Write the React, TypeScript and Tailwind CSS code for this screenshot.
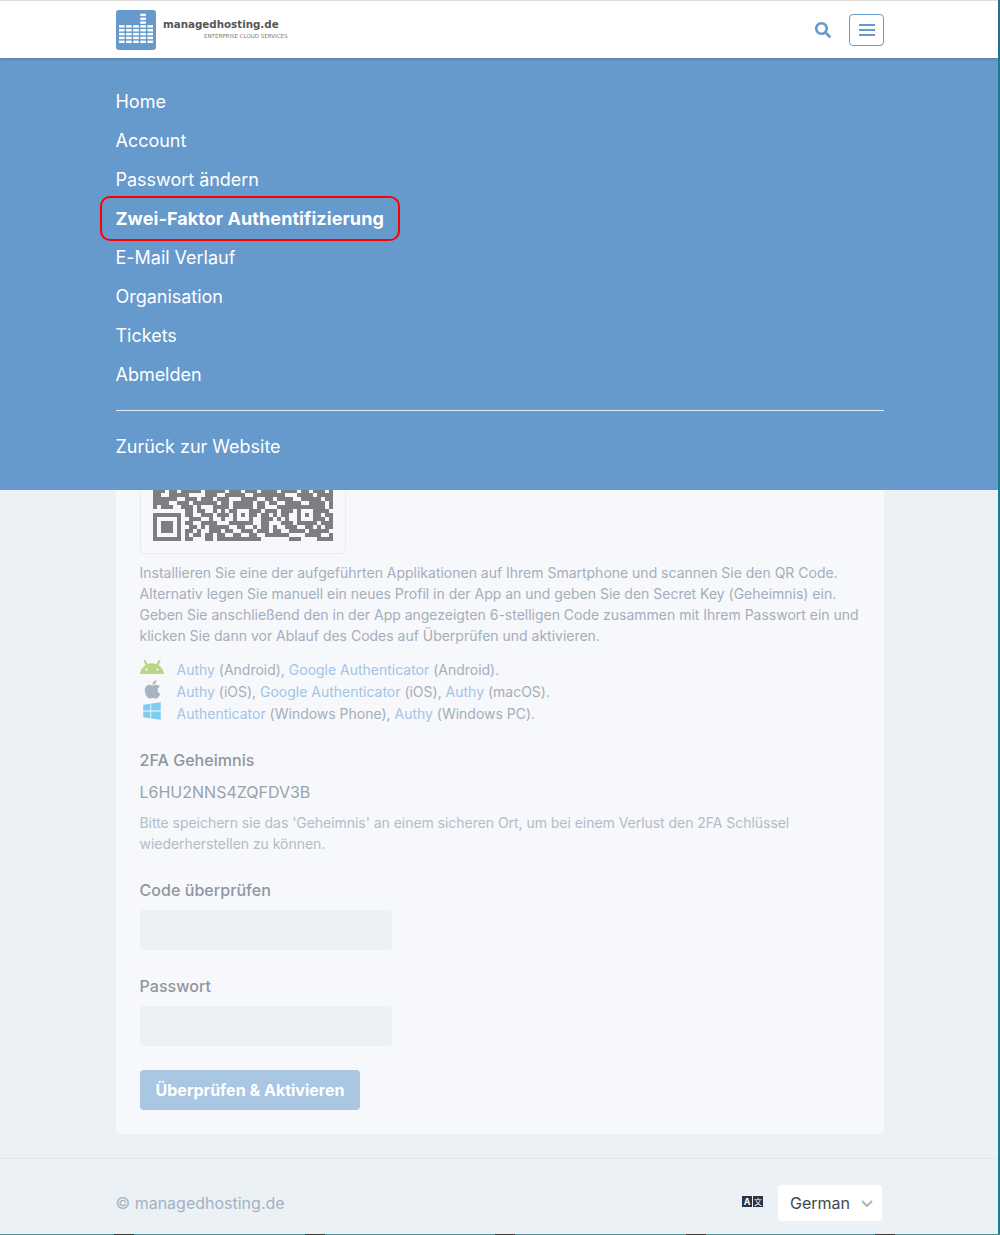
// App.tsx
import { FaApple, FaSearch, FaWindows } from "react-icons/fa";
import { SiAndroid } from "react-icons/si";

const menuItems = ["Home", "Account", "Passwort ändern", "Zwei-Faktor Authentifizierung", "E-Mail Verlauf", "Organisation", "Tickets", "Abmelden"];

// untere Zeilen des QR Codes, der Rest liegt hinter dem Menü
const qrRows = [
  "111011011111011111011101110111101111011011101",
  "110011111000011100111110011111111000111101111",
  "111111001110111011100011110011011110011111011",
  "111100111011111101101111101101100111100111101",
  "101110011101000111101111101100011111111111101",
  "000000001101100101011000111011101110100011110",
  "111111101100111011101010110110101100101011011",
  "100000100111001001001000100111010100100011101",
  "101110101100111100011111100110001110111110111",
  "101110100110101111100110010110100111001101011",
  "101110101101001110110011101110110011110111110",
  "100000101011011011001100110011111100001111001",
  "111111101100011011111111111000000011100001111",
];

const footerMarks = [114, 305, 495, 686, 875];

function Logo() {
  const cols = [0, 1, 2, 3, 4];
  const rows = [0, 1, 2, 3, 4];
  return (
    <svg width="40" height="40" viewBox="0 0 40 40">
      <rect width="40" height="40" rx="3" fill="#6699cc" />
      {cols.map((c) =>
        rows.map((r) => <rect key={`${c}-${r}`} x={3 + c * 7.1} y={15.2 + r * 3.85} width="5.6" height="2.4" fill="#fff" />)
      )}
      {[3.7, 7.6, 11.4].map((y) => (
        <rect key={y} x={24.3} y={y} width="5.6" height="2.4" fill="#fff" />
      ))}
    </svg>
  );
}

function QrCode() {
  return (
    <svg width="180" height="52" viewBox="0 0 180 52" className="block" shapeRendering="crispEdges">
      {qrRows.map((row, y) =>
        row.split("").map((cell, x) => (cell === "1" ? <rect key={`${x}-${y}`} x={x * 4} y={y * 4} width="4" height="4" fill="#7c7e82" /> : null))
      )}
    </svg>
  );
}

function LanguageIcon() {
  return (
    <svg width="21" height="11" viewBox="0 0 21 11">
      <rect width="10" height="11" fill="#2b3147" />
      <rect x="11" width="10" height="11" fill="#2b3147" />
      <text x="5" y="9" textAnchor="middle" fontSize="9" fontWeight="700" fill="#fff" fontFamily="Inter, sans-serif">A</text>
      <text x="16" y="9" textAnchor="middle" fontSize="8" fill="#fff" fontFamily="'Noto Sans CJK SC', sans-serif">文</text>
    </svg>
  );
}

export default function App() {
  return (
    <div className="relative w-[1000px] h-[1235px] overflow-hidden bg-[#1f7a94] [font-family:Inter,sans-serif]">
      <div className="relative w-[998px] h-[1234px] bg-[#ecf1f5]">
        {/* Kopfzeile */}
        <header className="relative z-20 h-[58px] bg-white border-t border-[#dcdcdc] shadow-[0_1px_3px_rgba(0,0,0,0.2)]">
          <div className="mx-[116px] w-[768px] h-full flex items-center justify-between">
            <div className="flex items-start">
              <Logo />
              <div className="ml-[7px] w-[124px] pt-[7px] [font-family:'DejaVu_Sans',sans-serif]">
                <div className="text-[10.3px] leading-[14px] font-bold text-[#555555] whitespace-nowrap">managedhosting.de</div>
                <div className="mt-[2px] ml-[41px] text-[5.5px] leading-[7px] text-[#777777] whitespace-nowrap">ENTERPRISE CLOUD SERVICES</div>
              </div>
            </div>
            <div className="flex items-center">
              <FaSearch className="text-[#6699cc] w-[16px] h-[16px] mr-[18px]" />
              <button className="w-[35px] h-[32px] flex flex-col items-center justify-center gap-[3px] border border-[#6699cc] rounded">
                <span className="block w-[16px] h-[2px] bg-[#6699cc]" />
                <span className="block w-[16px] h-[2px] bg-[#6699cc]" />
                <span className="block w-[16px] h-[2px] bg-[#6699cc]" />
              </button>
            </div>
          </div>
        </header>

        {/* Aufgeklapptes Menü */}
        <nav className="absolute z-10 left-0 top-[58px] w-full h-[432px] bg-[#6699cc] pl-[115.5px] pr-[114px] pt-[24px] text-white text-[18px] tracking-[-0.02px]">
          {menuItems.map((item, i) => (
            <div key={item} className={`h-[39px] leading-[39px] ${i === 3 ? "font-bold tracking-[0.07px]" : ""}`}>
              {item}
            </div>
          ))}
          <div className="mt-[16px] border-t border-white/80 pt-[16px] leading-[39px]">Zurück zur Website</div>
          <div className="absolute left-[100px] top-[138px] w-[300px] h-[45px] border-2 border-[#ff0000] rounded-[10px]" />
        </nav>

        {/* Inhalt, oberer Teil liegt hinter dem Menü */}
        <main className="mx-[116px] w-[768px] pt-[266px]">
          <section className="bg-[#f6f8fc] rounded px-[24px] pt-[24px] pb-[24px] h-[810px]">
            <div className="w-[206px] h-[206px] border border-[#e9ecf2] rounded-sm flex flex-col justify-end px-[12px] pb-[12px]">
              <QrCode />
            </div>
            <p className="mt-[8px] -ml-[0.5px] text-[14px] leading-[21px] tracking-[-0.01px] text-[#a5aeb9]">
              Installieren Sie eine der aufgeführten Applikationen auf Ihrem Smartphone und scannen Sie den QR Code. Alternativ legen Sie manuell ein neues Profil in der App an und geben Sie den Secret Key (Geheimnis) ein. Geben Sie anschließend den in der App angezeigten 6-stelligen Code zusammen mit Ihrem Passwort ein und klicken Sie dann vor Ablauf des Codes auf Überprüfen und aktivieren.
            </p>
            <ul className="mt-[13px] text-[14px] leading-[22px] tracking-[-0.01px] text-[#a5aeb9]">
              <li className="flex h-[22px]">
                <span className="w-[36.5px] flex items-center">
                  <SiAndroid className="w-[24px] h-[24px] -mt-[7px] -ml-[0.5px] text-[#b7d688]" />
                </span>
                <span><a className="text-[#a3c4e6]">Authy</a> (Android), <a className="text-[#a3c4e6]">Google Authenticator</a> (Android).</span>
              </li>
              <li className="flex h-[22px]">
                <span className="w-[36.5px] flex items-center pl-[2px]">
                  <FaApple className="w-[21px] h-[21px] -mt-[5px] text-[#a9b4c2]" />
                </span>
                <span><a className="text-[#a3c4e6]">Authy</a> (iOS), <a className="text-[#a3c4e6]">Google Authenticator</a> (iOS), <a className="text-[#a3c4e6]">Authy</a> (macOS).</span>
              </li>
              <li className="flex h-[22px]">
                <span className="w-[36.5px] flex items-center pl-[2px]">
                  <FaWindows className="w-[20px] h-[20px] -mt-[6px] text-[#7dcdf3]" />
                </span>
                <span><a className="text-[#a3c4e6]">Authenticator</a> (Windows Phone), <a className="text-[#a3c4e6]">Authy</a> (Windows PC).</span>
              </li>
            </ul>
            <h3 className="mt-[24px] -ml-[0.5px] text-[16px] leading-[22px] font-medium tracking-[0.05px] text-[#8f969f]">2FA Geheimnis</h3>
            <div className="mt-[10px] -ml-[0.5px] text-[16px] leading-[22px] text-[#9aa2ab]">L6HU2NNS4ZQFDV3B</div>
            <p className="mt-[9px] -ml-[0.5px] text-[14px] leading-[21px] tracking-[-0.04px] text-[#b3bcc6]">
              Bitte speichern sie das 'Geheimnis' an einem sicheren Ort, um bei einem Verlust den 2FA Schlüssel wiederherstellen zu können.
            </p>
            <label className="block mt-[25px] -ml-[0.5px] text-[16px] leading-[22px] font-medium tracking-[0.05px] text-[#8f969f]">Code überprüfen</label>
            <div className="mt-[9px] w-[252px] h-[40px] bg-[#edf1f5] rounded-sm" />
            <label className="block mt-[25px] -ml-[0.5px] text-[16px] leading-[22px] font-medium tracking-[0.05px] text-[#8f969f]">Passwort</label>
            <div className="mt-[9px] w-[252px] h-[40px] bg-[#edf1f5] rounded-sm" />
            <button className="block mt-[24px] w-[220px] h-[40px] bg-[#a9c6e3] rounded text-white text-[16px] font-bold">
              Überprüfen &amp; Aktivieren
            </button>
          </section>
        </main>

        {/* Fußzeile */}
        <footer className="mt-[24px] border-t border-[#e2e8ee] h-[76px]">
          <div className="mx-[116px] w-[768px] pt-[26px] flex items-center justify-between">
            <span className="-ml-[0.5px] text-[16px] text-[#a3b1c4]">© managedhosting.de</span>
            <div className="flex items-center mr-[2px]">
              <span className="-mt-[4px] flex">
                <LanguageIcon />
              </span>
              <div className="ml-[15px] w-[104px] h-[36px] bg-white rounded-sm flex items-center justify-between pl-[12px] pr-[9px] text-[16px] text-[#3d4852]">
                German
                <svg width="12" height="7" viewBox="0 0 12 7" fill="none" stroke="#a9b4c2" strokeWidth="2"><path d="M1 1l5 5 5-5" /></svg>
              </div>
            </div>
          </div>
        </footer>
      </div>

      {/* Streifen am unteren Rand */}
      <div className="relative h-px w-full bg-[#4f9191]">
        {footerMarks.map((x) => (
          <span key={x} className="absolute top-0 h-px w-[20px] bg-[#3a3a3a]" style={{ left: x }} />
        ))}
      </div>
    </div>
  );
}
